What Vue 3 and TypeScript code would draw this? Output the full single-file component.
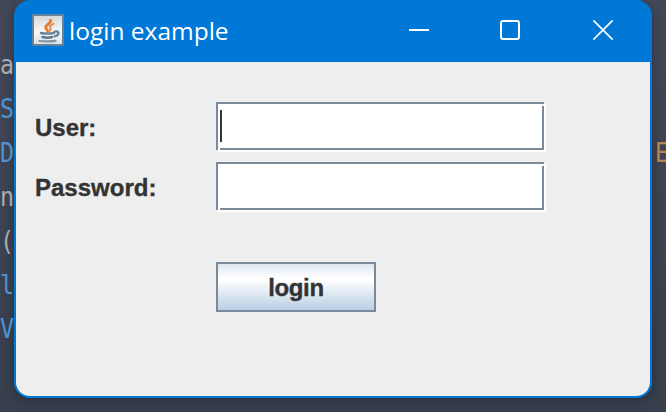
<script setup lang="ts">
import { ref } from 'vue'

interface CodeGlyph {
  text: string
  tone: 'plain' | 'type'
}

const title = 'login example'
const user = ref('')
const password = ref('')

const gutter: CodeGlyph[] = [
  { text: 'a', tone: 'plain' },
  { text: 'S', tone: 'type' },
  { text: 'D', tone: 'type' },
  { text: 'n', tone: 'plain' },
  { text: '(', tone: 'plain' },
  { text: 'l', tone: 'type' },
  { text: 'V', tone: 'type' },
]
</script>

<template>
  <main class="desktop">
    <div class="code-left">
      <span v-for="(g, i) in gutter" :key="i" :class="['glyph', g.tone]">{{ g.text }}</span>
    </div>

    <section class="window">
      <header class="titlebar">
        <svg class="java" width="32" height="32" viewBox="0 0 32 32">
          <defs>
            <linearGradient id="tile" x1="0" y1="0" x2="0" y2="1">
              <stop offset="0" stop-color="#d4d6d6" />
              <stop offset="0.55" stop-color="#f8f8f7" />
              <stop offset="1" stop-color="#dde0e2" />
            </linearGradient>
          </defs>
          <rect x="1" y="1" width="30" height="30" rx="1" fill="url(#tile)" stroke="#66839a" stroke-width="2" />
          <g fill="none" stroke-linecap="round">
            <path d="M18.500 6.200c1.600 3-6 4.600-4.800 7.800.3 1 1.400 1.700 2 3" stroke="#e67c2e" stroke-width="2.800" />
            <path d="M21.500 9.800c-3.400 1.400-4.200 2.800-3 4.400.6.9.1 1.700-.8 2.600" stroke="#e8944f" stroke-width="2.200" />
            <path d="M9 19c3 .6 9 .6 13 0" stroke="#688497" stroke-width="2.400" />
            <path d="M22.500 17.600c5.400-1.400 5.200 3.600.2 4.800" stroke="#688497" stroke-width="2.400" />
            <path d="M10.500 23c3 .8 7 .8 9.500 0" stroke="#587991" stroke-width="2.500" />
            <path d="M7.500 27c5 .5 11 .5 16-.1" stroke="#7e97a7" stroke-width="2.200" />
          </g>
        </svg>
        <h1 class="title">{{ title }}</h1>
        <div class="controls">
          <button class="control" type="button" aria-label="Minimize">
            <svg width="20" height="20" viewBox="0 0 20 20"><path d="M0 10h20" /></svg>
          </button>
          <button class="control" type="button" aria-label="Maximize">
            <svg width="20" height="20" viewBox="0 0 20 20"><rect x="1" y="1" width="18" height="18" rx="2" /></svg>
          </button>
          <button class="control" type="button" aria-label="Close">
            <svg width="20" height="20" viewBox="0 0 20 20"><path class="cross" d="M.4.4l19.200 19.200M19.600.4L.4 19.600" /></svg>
          </button>
        </div>
      </header>

      <form class="form" @submit.prevent>
        <label for="user">User:</label>
        <div class="field">
          <span class="caret"></span>
          <input id="user" v-model="user" type="text" autocomplete="off" />
        </div>
        <label for="password">Password:</label>
        <div class="field">
          <input id="password" v-model="password" type="password" autocomplete="off" />
        </div>
        <button class="login" type="submit">login</button>
      </form>
    </section>

    <div class="code-right"><span class="glyph accent">E</span></div>
  </main>
</template>

<style>
body {
  margin: 0;
  overflow: hidden;
}
</style>

<style scoped>
.desktop {
  display: grid;
  grid-template-columns: 14px 638px 14px;
  width: 666px;
  height: 412px;
  overflow: hidden;
  background: linear-gradient(180deg, #424857 0, #3d4453 45%, #383f4d 100%);
}

.code-left,
.code-right {
  display: flex;
  flex-direction: column;
  font: 26.5px/44px 'DejaVu Sans Mono', monospace;
}

.code-left {
  align-items: flex-end;
  padding: 43px 0.5px 0 0;
}

.code-right {
  align-items: flex-start;
  padding: 131px 0 0 3px;
}

.glyph {
  height: 44px;
  transform: scaleX(0.88);
  transform-origin: right center;
}

.plain {
  color: #a9abac;
}

.type {
  color: #4f92cf;
}

.accent {
  color: #b78450;
  transform-origin: left center;
}

.window {
  box-sizing: border-box;
  height: 398px;
  border: 2px solid #0078d7;
  border-top: 0;
  border-radius: 16px;
  background: linear-gradient(#0078d7 0 62px, #eeeeee 62px);
  box-shadow: 0 3px 12px rgba(20, 24, 36, 0.4);
}

.titlebar {
  display: flex;
  align-items: center;
  box-sizing: border-box;
  height: 62px;
  padding: 0 0 2px 16px;
}

.java {
  flex: none;
}

.title {
  margin: 2px 0 0 5px;
  color: #ffffff;
  font: 400 24.5px/32px 'Open Sans', 'Noto Sans', sans-serif;
  white-space: nowrap;
}

.controls {
  display: flex;
  margin-left: auto;
  padding-right: 1px;
}

.control {
  display: flex;
  align-items: center;
  justify-content: center;
  width: 92px;
  height: 60px;
  padding: 0;
  border: 0;
  background: transparent;
}

.control:nth-child(2) {
  padding-right: 2px;
}

.control svg {
  flex: none;
  fill: none;
  stroke: #ffffff;
  stroke-width: 2;
}

.control .cross {
  stroke-width: 1.7;
}

.form {
  display: grid;
  grid-template-columns: 181px 330px;
  grid-template-rows: 50px 50px 50px;
  row-gap: 10px;
  padding: 40px 0 0 19px;
  color: #333333;
  font: 700 24px/50px 'Liberation Sans', Arial, sans-serif;
}

.form label {
  padding-top: 1px;
  -webkit-text-stroke: 0.35px #333333;
}

.field {
  display: flex;
  box-sizing: border-box;
  height: 50px;
  border-right: 2px solid #ffffff;
  border-bottom: 2px solid #ffffff;
  background:
    linear-gradient(#f7f7f7, #f7f7f7) 326px 2px / 2px 2px no-repeat,
    linear-gradient(#ffffff, #ffffff) 0 46px / 4px 2px no-repeat,
    linear-gradient(#7a8a99, #7a8a99) 0 0 / 328px 2px no-repeat,
    linear-gradient(#7a8a99, #7a8a99) 326px 0 / 2px 48px no-repeat,
    linear-gradient(#7a8a99, #7a8a99) 0 46px / 328px 2px no-repeat,
    #ffffff;
  background-origin: border-box;
  box-shadow: inset 2px 0 0 #7a8a99;
  /* Notches the corners where the outer highlight has not begun. */
  clip-path: polygon(0 0, 328px 0, 328px 2px, 330px 2px, 330px 50px, 2px 50px, 2px 48px, 0 48px);
}

.caret {
  flex: none;
  width: 2px;
  height: 32px;
  margin: 8px 0 0 4px;
  background: #333333;
}

.field input {
  flex: 1;
  min-width: 0;
  margin: 4px;
  padding: 0;
  border: 0;
  outline: 0;
  background: transparent;
  color: #333333;
  font: 24px 'Liberation Sans', Arial, sans-serif;
}

.login {
  grid-column: 2;
  box-sizing: border-box;
  width: 160px;
  height: 50px;
  margin-top: 40px;
  padding: 1px 0 0;
  border: 2px solid #7a8a99;
  background: linear-gradient(180deg, #dde8f3 0, #ffffff 30%, #ffffff 34%, #dfe8f2 65%, #b8cfe5 100%);
  color: #333333;
  font: 700 24px/45px 'Liberation Sans', Arial, sans-serif;
  letter-spacing: -0.4px;
  -webkit-text-stroke: 0.35px #333333;
}
</style>
